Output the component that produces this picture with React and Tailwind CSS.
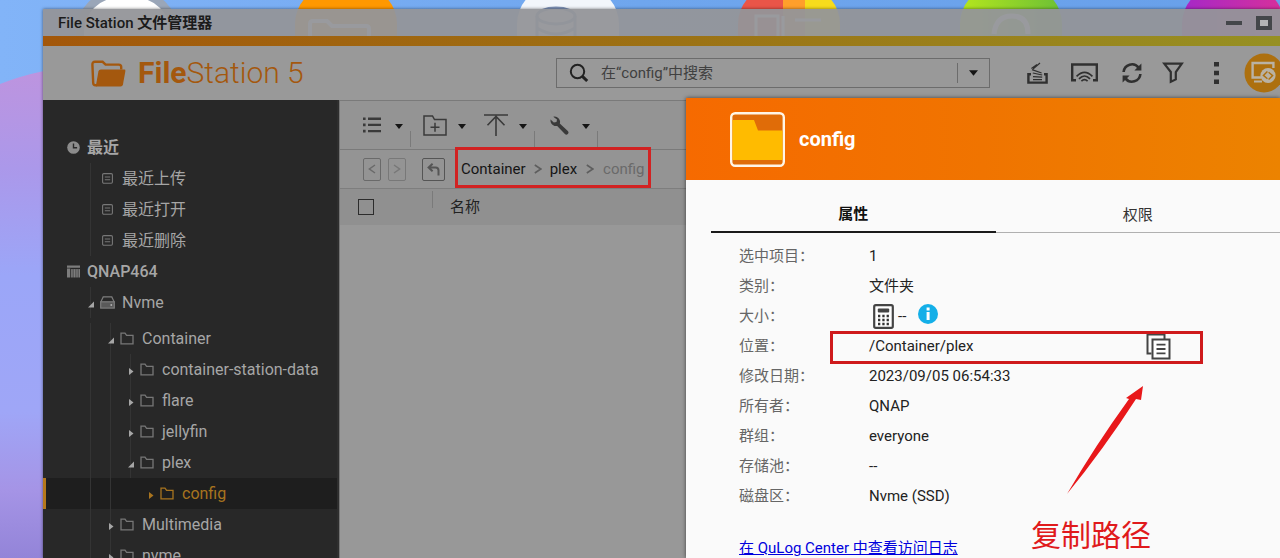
import React from "react";

const APPS = [
  { x: 76, fill: "#ffffff", ring: "#9aa6b8" },
  { x: 295, fill: "#ff9800" },
  { x: 517, fill: "#f2f6fb" },
  { x: 738, fill: "url(#tiles)" },
  { x: 960, fill: "url(#lime)" },
  { x: 1182, fill: "url(#violet)" },
];

function Desktop() {
  return (
    <svg
      className="absolute inset-0 h-full w-full"
      viewBox="0 0 1280 558"
      preserveAspectRatio="xMinYMin slice"
      aria-hidden="true"
    >
      <defs>
        <linearGradient id="sky" x1="0" y1="0" x2="1" y2="0">
          <stop offset="0" stopColor="#82b4f8" />
          <stop offset="0.5" stopColor="#6fa6ee" />
          <stop offset="1" stopColor="#68a0ea" />
        </linearGradient>
        <linearGradient id="hill" x1="0" y1="0" x2="0" y2="1">
          <stop offset="0" stopColor="#bd94df" />
          <stop offset="0.2" stopColor="#ab98ea" />
          <stop offset="0.42" stopColor="#9ba6f8" />
          <stop offset="0.7" stopColor="#9fa6f7" />
          <stop offset="0.86" stopColor="#a594e6" />
          <stop offset="1" stopColor="#9384d8" />
        </linearGradient>
        <linearGradient id="tiles" x1="0" y1="0" x2="1" y2="0">
          <stop offset="0.44" stopColor="#ea5548" />
          <stop offset="0.44" stopColor="#ff9f2b" />
          <stop offset="0.66" stopColor="#ff9f2b" />
          <stop offset="0.66" stopColor="#f7dc1c" />
        </linearGradient>
        <linearGradient id="lime" x1="0" y1="0" x2="1" y2="0">
          <stop offset="0" stopColor="#b5e61d" />
          <stop offset="1" stopColor="#6cc036" />
        </linearGradient>
        <linearGradient id="violet" x1="0" y1="0" x2="1" y2="0">
          <stop offset="0" stopColor="#a528c8" />
          <stop offset="1" stopColor="#d8309a" />
        </linearGradient>
      </defs>
      <rect width="1280" height="558" fill="url(#sky)" />
      <path d="M0 84 Q20 76 44 71 V558 H0Z" fill="url(#hill)" />
      {APPS.map((a) => (
        <rect
          key={a.x}
          x={a.ring ? a.x + 4 : a.x}
          y={a.ring ? -6 : -14}
          width={a.ring ? 94 : 102}
          height="102"
          rx="38"
          fill={a.fill}
          stroke={a.ring || "none"}
          strokeWidth={a.ring ? 8 : 0}
        />
      ))}
      <path d="M310 36V24q0-3 3-3h14l5 5h34q3 0 3 3v7" fill="none" stroke="#fff" strokeWidth="4" />
      <g fill="none" stroke="#7f93b8" strokeWidth="3">
        <ellipse cx="556" cy="16" rx="19" ry="8" />
        <path d="M537 16v24M575 16v24M537 28q19 12 38 0" />
      </g>
      <path d="M756 16h22v22h-22zM783 16v20M795 20h26" fill="none" stroke="#fff" strokeWidth="3" />
      <path d="M994 34q2-18 18-18t16 18" fill="none" stroke="#fff" strokeWidth="5" />
    </svg>
  );
}

function Caret({ className = "" }) {
  return (
    <svg className={"h-[5px] w-2 " + className} viewBox="0 0 8 5" aria-hidden="true">
      <path d="M0 0h8L4 5z" fill="#151515" />
    </svg>
  );
}

function FolderGlyph() {
  return (
    <svg width="14" height="13" viewBox="0 0 14 13" fill="none" stroke="currentColor" strokeWidth="1.3">
      <path d="M1 11.8V1.2h4l1.6 2.2H13v8.4z" />
    </svg>
  );
}

function ListGlyph() {
  return (
    <svg width="11" height="11" viewBox="0 0 11 11" fill="none" stroke="currentColor" strokeWidth="1.1">
      <rect x="0.6" y="0.6" width="9.8" height="9.6" rx="1.2" />
      <path d="M2.8 4h5.4M2.8 6.8h5.4" />
    </svg>
  );
}

function ClockGlyph() {
  return (
    <svg width="13" height="13" viewBox="0 0 13 13">
      <circle cx="6.5" cy="6.5" r="6.3" fill="#8c8c8c" />
      <path d="M6.5 2.4v4.4h3.6" fill="none" stroke="#282828" strokeWidth="1.4" />
    </svg>
  );
}

function NasGlyph() {
  return (
    <svg width="13" height="13" viewBox="0 0 13 13" fill="#7d7d7d">
      <path d="M0 0.5h13v2.2H0zM0 3.6h3.2v8.9H0z" />
      <path d="M4 4h9v8.5H4z" fill="#5c5c5c" />
      <path d="M4.4 4.2h1v8h-1zM7 4.2h1v8H7zM9.5 4.2h1v8h-1zM12 4.2h1v8h-1z" />
    </svg>
  );
}

function DriveGlyph() {
  return (
    <svg width="15" height="13" viewBox="0 0 15 13" fill="none" stroke="#7d7d7d">
      <path d="M0.8 6L3.2 0.9h8.6L14.2 6" strokeWidth="1.2" />
      <rect x="0.7" y="5.8" width="13.6" height="6.3" fill="#5a5a5a" strokeWidth="1.2" />
      <path d="M10.5 9h1.6" stroke="#bbb" strokeWidth="1.6" />
    </svg>
  );
}

function Twist({ open }) {
  return (
    <svg width="6" height="7" viewBox="0 0 6 7" fill="currentColor">
      {open ? <path d="M6 0.5V6.5H0z" /> : <path d="M1 0l4.5 3.5L1 7z" />}
    </svg>
  );
}

const TREE = [
  { label: "最近", pad: "pl-6", icon: <ClockGlyph />, bold: true },
  { label: "最近上传", pad: "pl-[59px]", icon: <ListGlyph />, lines: 1 },
  { label: "最近打开", pad: "pl-[59px]", icon: <ListGlyph />, lines: 1 },
  { label: "最近删除", pad: "pl-[59px]", icon: <ListGlyph />, lines: 1 },
  { label: "QNAP464", pad: "pl-6", icon: <NasGlyph />, bold: true },
  { label: "Nvme", pad: "pl-[45px]", icon: <DriveGlyph />, twist: "open", lines: 1 },
  { label: "Container", pad: "pl-[65px]", icon: <FolderGlyph />, twist: "open", lines: 2, gap: true },
  { label: "container-station-data", pad: "pl-[85px]", icon: <FolderGlyph />, twist: "shut", lines: 3 },
  { label: "flare", pad: "pl-[85px]", icon: <FolderGlyph />, twist: "shut", lines: 3 },
  { label: "jellyfin", pad: "pl-[85px]", icon: <FolderGlyph />, twist: "shut", lines: 3 },
  { label: "plex", pad: "pl-[85px]", icon: <FolderGlyph />, twist: "open", lines: 3 },
  { label: "config", pad: "pl-[105px]", icon: <FolderGlyph />, twist: "shut", lines: 2, active: true },
  { label: "Multimedia", pad: "pl-[65px]", icon: <FolderGlyph />, twist: "shut", lines: 2 },
  { label: "nvme", pad: "pl-[65px]", icon: <FolderGlyph />, twist: "shut", lines: 2 },
];

function TreeRow({ row }) {
  return (
    <li className={row.gap ? "mt-[5px]" : ""}>
      <button
        type="button"
        className={
          "relative flex h-[31px] w-full items-center text-left text-[16px] " +
          row.pad +
          (row.active ? " bg-[#1e1e1e] text-[#a8741f]" : " text-[#a6a6a6]")
        }
      >
        {row.active && <span className="absolute inset-y-0 left-0 w-[3px] bg-[#b5781c]" />}
        {row.lines >= 1 && <span className="absolute inset-y-0 left-[47px] w-px bg-[#343434]" />}
        {row.lines >= 2 && <span className="absolute inset-y-0 left-[67px] w-px bg-[#343434]" />}
        {row.lines >= 3 && <span className="absolute inset-y-0 left-[87px] w-px bg-[#343434]" />}
        {row.twist && (
          <span className="relative mr-[6px] mt-1 shrink-0">
            <Twist open={row.twist === "open"} />
          </span>
        )}
        <span
          className={
            "relative flex shrink-0 " +
            (row.bold || !row.twist ? "w-5" : "w-[22px]") +
            (row.active ? "" : " text-[#777777]")
          }
        >
          {row.icon}
        </span>
        <span className={"relative whitespace-nowrap leading-6 " + (row.icon.type === ClockGlyph ? "font-bold" : row.bold ? "font-medium" : "")}>
          {row.label}
        </span>
      </button>
    </li>
  );
}

function TitleBar() {
  return (
    <header className="flex h-[27px] items-center bg-[#939599]/95 pl-[15px]">
      <h1 className="text-[15px] font-medium leading-5 text-[#1b1b1b]">
        File Station <span className="font-bold">文件管理器</span>
      </h1>
      <div className="ml-auto flex items-center gap-[14px] pr-2">
        <button type="button" aria-label="最小化" className="flex h-4 w-4 items-center">
          <span className="h-1 w-full bg-[#44464a]" />
        </button>
        <button type="button" aria-label="最大化" className="h-[14px] w-4 border-4 border-[#44464a] bg-[#b4b4b6]" />
      </div>
    </header>
  );
}

function AppHeader() {
  return (
    <div className="flex h-[54px] items-center bg-[#999999] text-[#303030]">
      <div className="flex w-[513px] shrink-0 items-center pl-12 text-[#a4580e]">
        <svg width="35" height="27" viewBox="0 0 35 27" fill="none" aria-hidden="true">
          <path
            d="M6 25.2H4.4Q2.3 25.2 2.2 23L1.4 4.6Q1.3 1.8 4 1.8h7.6l3 2.8h13.2q2.4 0 2.4 2.4v2.4"
            stroke="#a4580e"
            strokeWidth="2.4"
          />
          <path d="M9.8 9.6H33.4q1.2 0 1 1.3L32 24.2q-.4 2.2-2.4 2.2H6q-1.2 0-1-1.2l2.4-13.6q.4-2 2.4-2z" fill="#a4580e" />
        </svg>
        <span className="ml-3 text-[30px] leading-9">
          <b className="font-bold">File</b>
          <span className="font-light">Station 5</span>
        </span>
      </div>
      <div className="flex h-[30px] min-w-0 flex-1 items-center border border-[#6c6c6c] pl-3">
        <svg width="20" height="20" viewBox="0 0 20 20" fill="none" stroke="#222" aria-hidden="true">
          <circle cx="8.5" cy="8.5" r="6.7" strokeWidth="2" />
          <path d="M13.4 13.4l4.8 4.6" strokeWidth="3" />
        </svg>
        <input
          type="search"
          aria-label="搜索"
          placeholder="在“config”中搜索"
          className="ml-3 min-w-0 flex-1 bg-transparent text-[15px] leading-5 outline-none placeholder:text-[#404040]"
        />
        <button type="button" aria-label="高级搜索" className="flex h-5 w-8 items-center border-l border-[#6c6c6c] pl-[11px]">
          <Caret className="h-[6px] w-[9px]" />
        </button>
      </div>
      <div className="flex shrink-0 items-center pl-[37px]">
        <button type="button" aria-label="后台任务" className="mr-[23px]">
          <svg width="21" height="24" viewBox="0 0 21 24" fill="none" stroke="currentColor">
            <path d="M4 13.2H1.4v8.4h18.2v-8.4H17" strokeWidth="2.4" />
            <path d="M6 18.6h9M6 15.7l9.2.5M5.8 12l9.4 2M5 8.6l9.6 3.4M4.4 7.4L10 3.6M6 8l7-6" strokeWidth="1.2" />
          </svg>
        </button>
        <button type="button" aria-label="网络播放" className="mr-[23px]">
          <svg width="27" height="20" viewBox="0 0 27 20" fill="none" stroke="currentColor">
            <path d="M5 17.2H1.2V1.5h24.6v15.7H22" strokeWidth="2.4" />
            <path d="M5.6 13.4q7.9-8 15.8 0M8 15.8q5.5-5.6 11 0M10.4 18.2q3.1-3 6.2 0" strokeWidth="1.7" />
          </svg>
        </button>
        <button type="button" aria-label="刷新" className="mr-[19px]">
          <svg width="22" height="22" viewBox="0 0 22 22" fill="none" stroke="currentColor" strokeWidth="2.6">
            <path d="M2.6 10a8.4 8.4 0 0 1 15-4.4M19.4 12a8.4 8.4 0 0 1-15 4.4" />
            <path d="M20.4 1.6v6.8h-7zM1.6 20.4v-6.8h7z" fill="currentColor" stroke="none" />
          </svg>
        </button>
        <button type="button" aria-label="筛选" className="mr-[30px]">
          <svg width="22" height="22" viewBox="0 0 22 22" fill="none" stroke="currentColor" strokeWidth="2.2">
            <path d="M2.2 1.6h17.6l-6 8.4v7.4l-5 2.4V10z" />
          </svg>
        </button>
        <button type="button" aria-label="更多" className="mr-[25px]">
          <svg width="5" height="22" viewBox="0 0 5 22" fill="currentColor">
            <path d="M0 0h5v4.5H0zM0 8.8h5v4.5H0zM0 17.5h5V22H0z" />
          </svg>
        </button>
        <button type="button" aria-label="远程挂载" className="-mr-1">
          <svg width="40" height="40" viewBox="0 0 40 40" fill="none">
            <circle cx="20" cy="20" r="19.5" fill="#ad700f" />
            <path d="M17 24.5H8.6V10h20.8v5" stroke="#b9b2a4" strokeWidth="2.4" />
            <path d="M10 28.5h8" stroke="#b9b2a4" strokeWidth="2" />
            <circle cx="24" cy="22.5" r="7.6" fill="#b9b2a4" />
            <path d="M23.4 18.4l-4 4 4 3.4M24.6 26.6l4-4-4-3.4" stroke="#ad700f" strokeWidth="1.4" />
          </svg>
        </button>
      </div>
    </div>
  );
}

function ToolButton({ label, width, divider, children }) {
  return (
    <div className={"flex h-full items-center " + width}>
      <button type="button" aria-label={label} className="flex flex-1 items-center justify-between">
        {children}
        <Caret className="mt-[2px] mr-[7px]" />
      </button>
      <span className={"mt-[30px] h-4 w-px self-start " + (divider ? "bg-[#7a7a7a]" : "")} />
    </div>
  );
}

function Main() {
  const arrow = (
    <svg width="8" height="10" viewBox="0 0 8 10" fill="none" stroke="#5e5e5e" strokeWidth="1.6" aria-hidden="true">
      <path d="M0.8 1l6 4-6 4" />
    </svg>
  );
  return (
    <main className="flex min-w-0 flex-1 flex-col border-l border-[#757575] bg-[#989898]">
      <div className="flex h-[50px] items-center border-y border-[#7a7a7a] bg-[#949494] pl-[23px] text-[#3a3a3a]">
        <ToolButton label="显示模式" width="w-12" divider>
          <svg width="18" height="16" viewBox="0 0 18 16" fill="currentColor">
            <path d="M0 .4h2.6V3H0zM5 .5h13v2.4H5zM0 6.6h2.6v2.6H0zM5 6.7h13v2.4H5zM0 12.8h2.6v2.6H0zM5 12.9h13v2.4H5z" />
          </svg>
        </ToolButton>
        <span className="w-3" />
        <ToolButton label="新建文件夹" width="w-[51px]">
          <svg width="24" height="21" viewBox="0 0 24 21" fill="none" stroke="currentColor" strokeWidth="1.5">
            <path d="M1 20V1h8.5l2 3.6H23V20zM12 7.8v9M7.5 12.3h9" />
          </svg>
        </ToolButton>
        <span className="w-[10px]" />
        <ToolButton label="上传" width="w-[51px]" divider>
          <svg width="24" height="22" viewBox="0 0 24 22" fill="none" stroke="currentColor" strokeWidth="1.6">
            <path d="M0 1h24M12 22V3M3.5 11.2L12 2.5l8.5 8.7" />
          </svg>
        </ToolButton>
        <span className="w-[15px]" />
        <ToolButton label="工具" width="w-12" divider>
          <svg width="19" height="19" viewBox="0 0 19 19" fill="currentColor">
            <path d="M3.2.8a5.4 5.4 0 0 1 6.6 6.8l8 7.5a2 2 0 0 1-2.9 2.9L7.2 9.9A5.4 5.4 0 0 1 .6 3.6l3.2 3 2.7-.6.5-2.6z" />
          </svg>
        </ToolButton>
      </div>
      <div className="flex h-[39px] items-center border-b border-[#7e7e7e] bg-[#949494] pl-[23px] text-[15px] text-[#6a6a6a]">
        <button type="button" aria-label="后退" className="flex h-[23px] w-[18px] items-center justify-center rounded-xs border border-[#6a6a6a]">
          <svg width="8" height="10" viewBox="0 0 8 10" fill="none" stroke="currentColor" strokeWidth="1.5"><path d="M7 1L1.4 5 7 9" /></svg>
        </button>
        <button type="button" aria-label="前进" className="ml-[7px] flex h-[23px] w-[18px] items-center justify-center rounded-xs border border-[#787878] text-[#787878]">
          <svg width="8" height="10" viewBox="0 0 8 10" fill="none" stroke="currentColor" strokeWidth="1.5"><path d="M1 1l5.6 4L1 9" /></svg>
        </button>
        <button type="button" aria-label="上一级" className="ml-4 flex h-[23px] w-[23px] items-center justify-center rounded-xs border border-[#555555] text-[#555555]">
          <svg width="13" height="13" viewBox="0 0 13 13" fill="none" stroke="currentColor" strokeWidth="2"><path d="M2 4.5h6.5q3 0 3 3V12.5M5.6.8L1.6 4.5l4 3.7" /></svg>
        </button>
        <nav aria-label="路径" className="relative ml-[10px] flex h-full items-center px-[6px]">
          <a href="#container" className="text-[#151515]">Container</a>
          <span className="px-2">{arrow}</span>
          <a href="#plex" className="text-[#151515]">plex</a>
          <span className="px-[9px]">{arrow}</span>
          <span className="text-[#6a6a6a]">config</span>
          <span className="pointer-events-none absolute -top-[3px] bottom-0 left-0 right-0 border-[3px] border-[#d22222]" />
        </nav>
      </div>
      <div className="flex h-9 items-center bg-[#909090] pl-[18px] text-[15px] text-[#222222]">
        <input type="checkbox" aria-label="全选" className="h-4 w-4 appearance-none border border-[#2c2c2c]" />
        <span className="ml-[58px] mt-[2px] h-[17px] w-px self-start bg-[#7a7a7a]" />
        <span className="ml-[17px]">名称</span>
      </div>
    </main>
  );
}

function SizeValue() {
  return (
    <span className="flex items-center">
      <button type="button" aria-label="计算大小" className="ml-1">
        <svg width="21" height="25" viewBox="0 0 21 25" fill="none">
          <rect x="1.2" y="1.2" width="18.6" height="22.6" rx="1.6" fill="#fff" stroke="#444" strokeWidth="2.2" />
          <rect x="4.8" y="4.4" width="11.4" height="4" rx="1" fill="#444" />
          <path d="M5 12h11M5 16h11M5 20h11" stroke="#333" strokeWidth="2.4" strokeDasharray="2.3 2" />
        </svg>
      </button>
      <span className="ml-1">--</span>
      <button type="button" aria-label="说明" className="mb-1 ml-3">
        <svg width="20" height="20" viewBox="0 0 20 20">
          <circle cx="10" cy="10" r="10" fill="#14afe8" />
          <path d="M8.6 3.6h3v2.8h-3zM8.6 8h3v8h-3z" fill="#fff" />
        </svg>
      </button>
    </span>
  );
}

function LocationValue() {
  return (
    <span className="flex w-[302px] items-center justify-between">
      /Container/plex
      <button type="button" aria-label="复制路径">
        <svg width="25" height="27" viewBox="0 0 25 27" fill="none" stroke="#444" strokeWidth="2">
          <path d="M5.5 20.5H1.5V1.5h17v4.8" />
          <rect x="6.5" y="6.5" width="17" height="19" fill="#fff" />
          <path d="M10.5 11.6h9M10.5 16h9M10.5 20.4h9" strokeWidth="1.8" />
        </svg>
      </button>
    </span>
  );
}

const DETAILS = [
  ["选中项目：", "1"],
  ["类别：", "文件夹"],
  ["大小：", <SizeValue />],
  ["位置：", <LocationValue />, true],
  ["修改日期：", "2023/09/05 06:54:33"],
  ["所有者：", "QNAP"],
  ["群组：", "everyone"],
  ["存储池：", "--"],
  ["磁盘区：", "Nvme (SSD)"],
];

function PropertiesDialog() {
  return (
    <section
      role="dialog"
      aria-label="config"
      className="absolute bottom-0 left-[643px] right-0 top-[89px] overflow-hidden bg-[#fafafa] shadow-[0_0_4px_rgba(0,0,0,0.6)]"
    >
      <div className="flex h-[82px] items-center bg-linear-to-r from-[#f66a00] via-[#f07400] to-[#ec8300] pl-11">
        <svg width="55" height="55" viewBox="0 0 55 55" aria-hidden="true">
          <rect x="1.2" y="1.2" width="52.6" height="52.6" rx="4" fill="#e06c08" stroke="#fff5e6" strokeWidth="2.4" />
          <path d="M2.5 8h21.5l4 10.5h24.5V48h-50z" fill="#ffbb00" />
        </svg>
        <h2 className="ml-[14px] text-[20px] font-bold leading-7 text-white">config</h2>
      </div>
      <div role="tablist" className="ml-[25px] flex pt-[18px] text-[15px]">
        <button type="button" role="tab" aria-selected="true" className="h-[35px] flex-1 border-b-2 border-[#1a1a1a] font-bold text-[#111111]">
          属性
        </button>
        <button type="button" role="tab" aria-selected="false" className="h-[35px] flex-1 border-b border-[#b0b0b0] text-[#333333]">
          权限
        </button>
      </div>
      <dl className="ml-[53px] mt-2 text-[15px]">
        {DETAILS.map(([label, value, marked]) => (
          <div key={label} className="relative grid h-[30px] grid-cols-[130px_1fr] items-center">
            {marked && (
              <span className="pointer-events-none absolute left-[91px] top-0 h-[33px] w-[373px] border-[3px] border-[#cf1a1c]" />
            )}
            <dt className="text-[#666666]">{label}</dt>
            <dd className="text-[#222222]">{value}</dd>
          </div>
        ))}
      </dl>
      <a href="#log" className="ml-[53px] mt-[25px] inline-block text-[15px] leading-6 text-[#0000dd] underline">
        在 QuLog Center 中查看访问日志
      </a>
      <div className="pointer-events-none absolute left-[345px] top-[288px] text-[#e01a1c]">
        <svg width="80" height="112" viewBox="0 0 80 112" className="ml-9" aria-hidden="true">
          <path d="M0 108Q28 60 62 13l-3-1L76 0l-2 14-5-1Q36 64 0 108Z" fill="#e8181a" />
        </svg>
        <p className="mt-5 text-[30px] leading-9">复制路径</p>
      </div>
    </section>
  );
}

export default function App() {
  return (
    <div className="relative flex h-screen flex-col overflow-hidden pl-[43px] pt-[9px] font-[Roboto,'Noto_Sans_CJK_SC',sans-serif]">
      <Desktop />
      <div className="relative flex min-h-0 flex-1 flex-col shadow-[0_0_3px_rgba(0,0,0,0.5)]">
        <TitleBar />
        <div className="h-[10px] bg-linear-to-r from-[#a3570a] via-[#9c7114] to-[#969023]" />
        <AppHeader />
        <div className="flex min-h-0 flex-1">
          <aside className="w-[296px] shrink-0 overflow-hidden border-r-2 border-[#2e2e2e] bg-[#282828] pt-8">
            <ul>
              {TREE.map((row) => (
                <TreeRow key={row.label} row={row} />
              ))}
            </ul>
          </aside>
          <Main />
        </div>
        <PropertiesDialog />
      </div>
    </div>
  );
}
